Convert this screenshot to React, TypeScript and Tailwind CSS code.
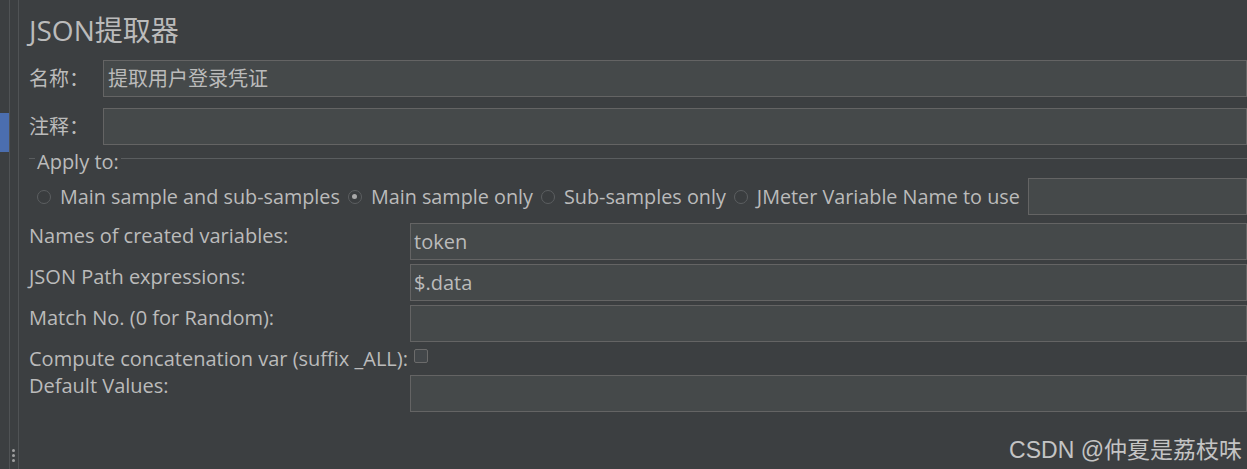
import React from 'react';

const font = { fontFamily: '"Open Sans", "Noto Sans CJK SC", sans-serif' };

function Radio({ checked, label }: { checked?: boolean; label: string }) {
  return (
    <div className="flex items-center gap-[9px]">
      <span className="flex h-[14px] w-[14px] items-center justify-center rounded-full border border-[#5c5f61] bg-[#3a3d3f]">
        {checked && <span className="h-[5px] w-[5px] rounded-full bg-[#a8a8a8]" />}
      </span>
      <span>{label}</span>
    </div>
  );
}

function Field({ value, className = '' }: { value?: string; className?: string }) {
  return (
    <div className={`flex h-[37px] items-center border border-[#646464] bg-[#45494a] px-[3px] ${className}`}>
      {value}
    </div>
  );
}

export default function App() {
  const rows: { label: string; value?: string }[] = [
    { label: 'Names of created variables:', value: 'token' },
    { label: 'JSON Path expressions:', value: '$.data' },
    { label: 'Match No. (0 for Random):' },
  ];

  return (
    <div className="relative flex h-[469px] w-[1247px] overflow-hidden bg-[#3c3f41] text-[20px] text-[#bbbbbb]" style={font}>
      {/* left gutter */}
      <div className="relative flex w-[19px] shrink-0 border-r border-[#505355]">
        <div className="w-[10px] border-r border-[#505355]">
          <div className="mt-[113px] h-[39px] w-[9px] bg-[#4b6eaf]" />
        </div>
        <div className="absolute left-[12px] top-[449px] flex flex-col gap-[2px]">
          <span className="h-[3px] w-[3px] rounded-full bg-[#a0a0a0]" />
          <span className="h-[3px] w-[3px] rounded-full bg-[#a0a0a0]" />
          <span className="h-[3px] w-[3px] rounded-full bg-[#a0a0a0]" />
        </div>
      </div>

      <div className="flex min-w-0 flex-1 flex-col pl-[10px]">
        <div className="h-[60px] pt-[13px] text-[28px] leading-[34px] text-[#bbbbbb]">JSON提取器</div>

        <div className="flex items-center">
          <span className="w-[74px] text-[20px]">名称：</span>
          <Field value="提取用户登录凭证" className="flex-1 pl-[4px] text-[20px]" />
        </div>
        <div className="mt-[11px] flex items-center">
          <span className="w-[74px] text-[20px]">注释：</span>
          <Field className="flex-1" />
        </div>

        {/* Apply to fieldset */}
        <div className="mt-[3px] flex h-[26px] items-start">
          <div className="mt-[10px] h-px w-[6px] bg-[#5a5d5f]" />
          <span className="px-[2px] pt-[2px] leading-[24px]">Apply to:</span>
          <div className="mt-[10px] h-px flex-1 bg-[#5a5d5f]" />
        </div>

        <div className="mt-[4px] flex items-center gap-[8px] pl-[8px] text-[19.8px]">
          <Radio label="Main sample and sub-samples" />
          <Radio checked label="Main sample only" />
          <Radio label="Sub-samples only" />
          <Radio label="JMeter Variable Name to use" />
          <Field className="flex-1" />
        </div>

        <div className="mt-[8px] grid grid-cols-[381px_1fr] gap-y-[4px]">
          {rows.map(r => (
            <React.Fragment key={r.label}>
              <span className="leading-[26px]">{r.label}</span>
              <Field value={r.value} />
            </React.Fragment>
          ))}
          <span className="h-[25px] leading-[26px]">Compute concatenation var (suffix _ALL):</span>
          <div className="pt-[3px] pl-[4px]">
            <span className="block h-[14px] w-[14px] rounded-[2px] border border-[#6b6b6b] bg-[#43474a]" />
          </div>
          <span className="-mt-[2px] leading-[26px]">Default Values:</span>
          <Field />
        </div>
      </div>

      <div
        className="absolute bottom-[4px] right-[5px] text-[23px] leading-[30px] text-[#c4c4c4]"
        style={{ fontFamily: '"Liberation Sans", "Noto Sans CJK SC", sans-serif' }}
      >
        CSDN @仲夏是荔枝味
      </div>
    </div>
  );
}
